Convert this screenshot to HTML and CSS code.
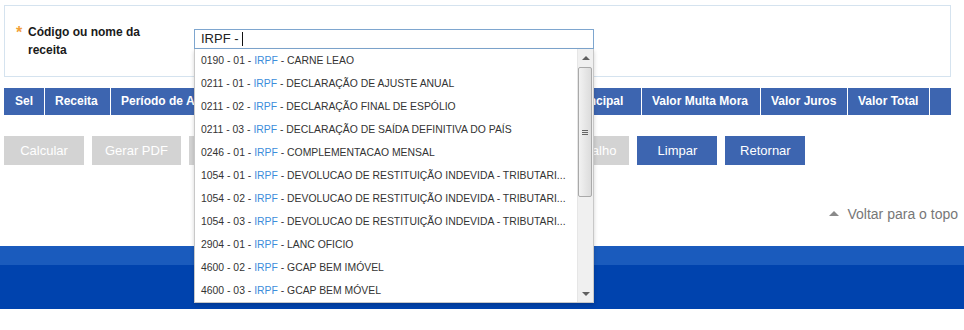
FILE: index.html
```html
<!DOCTYPE html>
<html lang="pt-BR">
<head>
<meta charset="utf-8">
<title>Sicalc</title>
<link rel="stylesheet" href="styles.css">
</head>
<body>
<div class="page">
  <div class="search-box">
    <div class="field-label"><span class="req">*</span><span class="label-text">Código ou nome da receita</span></div>
    <div class="combo">
      <div class="combo-input">IRPF -&nbsp;<span class="caret"></span></div>
      <div class="dropdown">
        <ul class="options">
          <li><span>0190 - 01 - </span><span class="hl">IRPF</span><span> - CARNE LEAO</span></li>
          <li><span>0211 - 01 - </span><span class="hl">IRPF</span><span> - DECLARAÇÃO DE AJUSTE ANUAL</span></li>
          <li><span>0211 - 02 - </span><span class="hl">IRPF</span><span> - DECLARAÇÃO FINAL DE ESPÓLIO</span></li>
          <li><span>0211 - 03 - </span><span class="hl">IRPF</span><span> - DECLARAÇÃO DE SAÍDA DEFINITIVA DO PAÍS</span></li>
          <li><span>0246 - 01 - </span><span class="hl">IRPF</span><span> - COMPLEMENTACAO MENSAL</span></li>
          <li><span>1054 - 01 - </span><span class="hl">IRPF</span><span> - DEVOLUCAO DE RESTITUIÇÃO INDEVIDA - TRIBUTARI...</span></li>
          <li><span>1054 - 02 - </span><span class="hl">IRPF</span><span> - DEVOLUCAO DE RESTITUIÇÃO INDEVIDA - TRIBUTARI...</span></li>
          <li><span>1054 - 03 - </span><span class="hl">IRPF</span><span> - DEVOLUCAO DE RESTITUIÇÃO INDEVIDA - TRIBUTARI...</span></li>
          <li><span>2904 - 01 - </span><span class="hl">IRPF</span><span> - LANC OFICIO</span></li>
          <li><span>4600 - 02 - </span><span class="hl">IRPF</span><span> - GCAP BEM IMÓVEL</span></li>
          <li><span>4600 - 03 - </span><span class="hl">IRPF</span><span> - GCAP BEM MÓVEL</span></li>
        </ul>
        <div class="scrollbar">
          <div class="sb-btn"><span class="arrow-up"></span></div>
          <div class="sb-track">
            <div class="sb-thumb"><span class="grip"></span></div>
          </div>
          <div class="sb-btn sb-btn-down"><span class="arrow-down"></span></div>
        </div>
      </div>
    </div>
  </div>

  <div class="grid-head">
    <div class="th th-center">Sel</div>
    <div class="th">Receita</div>
    <div class="th">Período de Apuração</div>
    <div class="th">Data de Vencimento</div>
    <div class="th">Nº de Referência</div>
    <div class="th">Valor Principal</div>
    <div class="th">Valor Multa Mora</div>
    <div class="th">Valor Juros</div>
    <div class="th">Valor Total</div>
    <div class="th"></div>
  </div>

  <div class="actions">
    <button class="btn btn-off">Calcular</button>
    <button class="btn btn-off">Gerar PDF</button>
    <button class="btn btn-off btn-wide">Imprimir</button>
    <button class="btn btn-off">Gerar Espelho</button>
    <button class="btn btn-off">Abrir Trabalho</button>
    <button class="btn btn-off">Salvar Trabalho</button>
    <button class="btn btn-on">Limpar</button>
    <button class="btn btn-on">Retornar</button>
  </div>
</div>

<div class="back-top"><a class="back-link" href="#"><span class="tri"></span>Voltar para o topo</a></div>

<footer class="footer">
  <div class="footer-top"></div>
  <div class="footer-main"></div>
</footer>
</body>
</html>
```
FILE: styles.css
```css
* { box-sizing: border-box; }
html, body { margin: 0; padding: 0; background: #fff; }
body { font-family: "Liberation Sans", Arial, sans-serif; color: #222; }

.page { padding: 5px 13px 0 4px; }

.search-box {
  height: 72px;
  border: 1px solid #d5e3ef;
  display: flex;
  align-items: flex-start;
  padding-top: 17px;
}
.field-label {
  width: 189px;
  padding-left: 11px;
  display: flex;
  font-size: 12px;
  font-weight: bold;
  line-height: 18px;
  color: #1a1a1a;
}
.req {
  width: 12px;
  color: #f2a03a;
  font-weight: bold;
  font-size: 16px;
  line-height: 18px;
  margin-top: 1px;
}
.label-text { width: 120px; }

.combo { position: relative; width: 400px; margin-top: 6px; }
.combo-input {
  height: 20px;
  border: 1px solid #7ea6cf;
  padding-left: 6px;
  font-size: 13px;
  line-height: 18px;
  color: #222;
  display: flex;
  align-items: center;
  white-space: pre;
}
.caret { display: inline-block; width: 1px; height: 14px; background: #111; }

.dropdown {
  position: absolute;
  top: 20px;
  left: 0;
  width: 400px;
  height: 254px;
  background: #fff;
  border: 1px solid #c8c8c8;
  border-top: none;
  box-shadow: 0 2px 4px rgba(0,0,0,0.18);
  display: flex;
  z-index: 10;
}
.options {
  list-style: none;
  margin: 0;
  padding: 0;
  flex: 1;
  min-width: 0;
}
.options li {
  height: 23px;
  line-height: 23px;
  padding: 0 6px 0 6px;
  font-size: 10.4px;
  color: #333;
  white-space: nowrap;
  overflow: hidden;
}
.hl { color: #3b8ddb; }

.scrollbar {
  width: 16px;
  background: #f0f0f0;
  border-left: 1px solid #e6e6e6;
  display: flex;
  flex-direction: column;
}
.sb-btn {
  height: 17px;
  display: flex;
  align-items: center;
  justify-content: center;
}
.sb-btn-down { margin-top: auto; }
.arrow-up {
  width: 0; height: 0;
  border-left: 4px solid transparent;
  border-right: 4px solid transparent;
  border-bottom: 4px solid #606060;
}
.arrow-down {
  width: 0; height: 0;
  border-left: 4px solid transparent;
  border-right: 4px solid transparent;
  border-top: 4px solid #606060;
}
.sb-track { flex: 1; padding: 1px 0 0 0; }
.sb-thumb {
  height: 130px;
  margin: 0 1px 0 0;
  border: 1px solid #a9a9a9;
  border-radius: 2px;
  background: linear-gradient(to right, #f2f2f2, #dcdcdc);
  display: flex;
  align-items: center;
  justify-content: center;
}
.grip {
  width: 6px;
  height: 5px;
  border-top: 1px solid #666;
  border-bottom: 1px solid #666;
  background: linear-gradient(#fff 0 1px, #666 1px 2px, #fff 2px);
  background-clip: content-box;
  padding: 1px 0;
}

.grid-head {
  margin-top: 11px;
  display: grid;
  grid-template-columns: 40px 65px 140px 130px 146px 111px 118px 86px 81px 21px;
  column-gap: 1px;
  background: #fff;
}
.th {
  height: 27px;
  background: #3d65b0;
  color: #fff;
  font-size: 12px;
  font-weight: bold;
  line-height: 27px;
  padding-left: 10px;
  white-space: nowrap;
  overflow: hidden;
}
.th-center { padding-left: 0; text-align: center; }

.actions {
  margin-top: 21px;
  display: flex;
  gap: 8px;
}
.btn {
  height: 29px;
  min-width: 80px;
  padding: 0 13px;
  border: none;
  font-family: "Liberation Sans", Arial, sans-serif;
  font-size: 13px;
  color: #fff;
  cursor: pointer;
}
.btn-wide { min-width: 82px; }
.btn-off { background: #d3d3d3; }
.btn-on { background: #3d65b0; }

.back-top {
  margin-top: 38px;
  padding-right: 6px;
  text-align: right;
  line-height: 16px;
}
.back-link {
  font-size: 14px;
  color: #777;
  text-decoration: none;
  display: inline-flex;
  align-items: center;
}
.tri {
  width: 0; height: 0;
  border-left: 5px solid transparent;
  border-right: 5px solid transparent;
  border-bottom: 5px solid #8a8a8a;
  margin-right: 8px;
}

.footer { margin-top: 24px; }
.footer-top { height: 19px; background: #1a5bbd; }
.footer-main { height: 44px; background: #0043ae; }
```
